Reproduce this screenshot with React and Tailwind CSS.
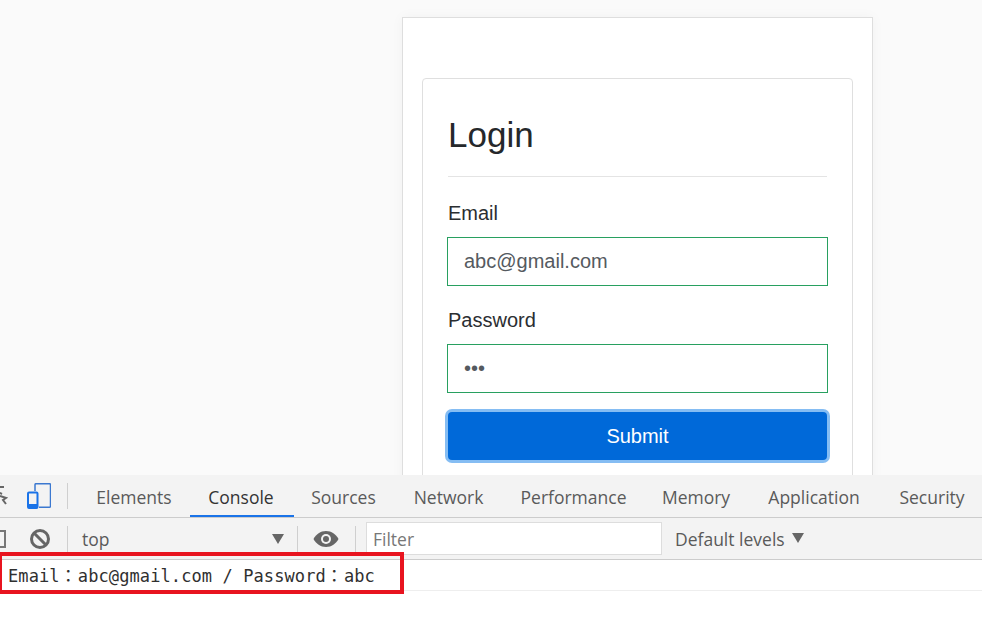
const SANS = "font-['Liberation_Sans',Arial,sans-serif]";

function Field({ label, value, className }) {
  return (
    <div className={className}>
      <div className="text-[20px] leading-[30px] text-[#2b2e31]">{label}</div>
      <div className="-mx-px mt-[9px] flex h-[49px] items-center border border-[#28a060] bg-white pb-[2px] pl-4 text-[20px] text-[#555a5f]">
        {value}
      </div>
    </div>
  );
}

function Tab({ children, active, className }) {
  return (
    <div
      className={`flex h-full items-center justify-center border-b-2 pt-[4px] ${
        active ? "border-[#1a73e8] pr-[2px] text-[#333]" : "border-transparent text-[#5a5a5a]"
      } ${className}`}
    >
      {children}
    </div>
  );
}

function Divider({ className }) {
  return <div className={`h-[26px] w-px bg-[#cfcfcf] ${className}`} />;
}

function Caret({ className }) {
  return (
    <svg width="12" height="10" viewBox="0 0 12 10" className={className}>
      <path d="M0 0h12L6 10z" fill="#666" />
    </svg>
  );
}

export default function App() {
  return (
    <div className={`flex h-[617px] w-[982px] flex-col overflow-hidden bg-white ${SANS}`}>
      {/* page under test */}
      <div className="h-[475px] shrink-0 overflow-hidden bg-[#fafafa] pl-[402px] pt-[17px]">
        <div className="h-[600px] w-[471px] border border-[#dedede] bg-white pl-[19px] pr-[19px] pt-[60px] shadow-[0_0_12px_rgba(0,0,0,0.04)]">
          <div className="h-[500px] rounded border border-[#dfdfdf] px-[25px] pt-[34px]">
            <h1 className="text-[35px] leading-[44px] text-[#25282b]">Login</h1>
            <div className="mt-[19px] h-px bg-[#e4e4e4]" />
            <Field label="Email" value="abc@gmail.com" className="mt-[21px]" />
            <Field
              label="Password"
              value={<span className="text-[20px] leading-none text-[#555a5f]">•••</span>}
              className="mt-[19px]"
            />
            <button className="mt-[19px] flex h-[48px] w-full items-center justify-center rounded-[4px] bg-[#0069d9] text-[20px] text-white shadow-[0_0_0_3px_#85bdf3]">
              Submit
            </button>
          </div>
        </div>
      </div>

      {/* devtools */}
      <div className="relative flex-1 font-['Open_Sans',sans-serif] text-[17.5px]">
        <div className="flex h-[43px] items-center border-b border-[#cccccc] bg-[#f3f3f3]">
          <svg width="8" height="26" viewBox="0 0 8 26" className="shrink-0">
            <path d="M-2 4h6M-2 9l4 2M0 13l6 2-3 2 3 4" fill="none" stroke="#666" strokeWidth="2" />
          </svg>
          <svg width="24" height="26" viewBox="0 0 24 26" className="ml-[19px] shrink-0">
            <path d="M8 8V1.700a1 1 0 0 1 1-1h13.500a1 1 0 0 1 1 1v21.600a1 1 0 0 1-1 1H12" fill="none" stroke="#3b78d0" strokeWidth="1.500" />
            <rect x="1" y="9.500" width="9.500" height="15.500" rx="1" fill="none" stroke="#1a73e8" strokeWidth="2" />
            <path d="M1 22.500h9.500" stroke="#1a73e8" strokeWidth="3" />
          </svg>
          <Divider className="ml-[16px] shrink-0" />
          <Tab className="ml-[28px] w-[76px]">Elements</Tab>
          <Tab active className="ml-[18px] w-[104px]">Console</Tab>
          <Tab className="ml-[17px] w-[65px]">Sources</Tab>
          <Tab className="ml-[37px] w-[71px]">Network</Tab>
          <Tab className="ml-[37px] w-[105px]">Performance</Tab>
          <Tab className="ml-[35px] w-[70px]">Memory</Tab>
          <Tab className="ml-[36px] w-[94px]">Application</Tab>
          <Tab className="ml-[38px] w-[66px]">Security</Tab>
        </div>

        <div className="flex h-[42px] items-center border-b border-[#cccccc] bg-[#f3f3f3] text-[#5a5a5a]">
          <div className="h-[18px] w-[6px] shrink-0 border-y-2 border-r-2 border-[#777]" />
          <svg width="22" height="22" viewBox="0 0 22 22" className="ml-[23px] shrink-0">
            <circle cx="11" cy="11" r="8.500" fill="none" stroke="#666" strokeWidth="3" />
            <path d="M5 5l12 12" stroke="#666" strokeWidth="3" />
          </svg>
          <Divider className="ml-[16px] shrink-0" />
          <span className="ml-[14px] mt-[2px] w-[190px] shrink-0">top</span>
          <Caret />
          <Divider className="ml-[13px] shrink-0" />
          <svg width="26" height="18" viewBox="0 0 26 18" className="ml-[15px] shrink-0">
            <path d="M13 1C7.500 1 3 4.500 0.500 9 3 13.500 7.500 17 13 17s10-3.500 12.500-8C23 4.500 18.500 1 13 1z" fill="#666" />
            <circle cx="13" cy="9" r="5" fill="#f3f3f3" />
            <circle cx="13" cy="9" r="3" fill="#666" />
          </svg>
          <Divider className="ml-[16px] shrink-0" />
          <div className="ml-[10px] flex h-[33px] w-[296px] shrink-0 items-center border border-[#dddddd] bg-white pl-[6px] pt-[2px] text-[#777]">
            Filter
          </div>
          <span className="ml-[13px] mt-[1px] shrink-0">Default levels</span>
          <Caret className="ml-[7px] -mt-[2px] shrink-0" />
        </div>

        <div className="flex h-[31px] items-center border-b border-[#eeeeee] bg-white pl-[8px] pt-[3px] font-['DejaVu_Sans_Mono','Noto_Sans_CJK_KR',monospace] text-[17px] tracking-[0.1px] text-[#303030]">
          Email<span className="mr-px">：</span>abc@gmail.com / Password<span className="mr-px">：</span>abc
        </div>

        {/* red annotation from the screenshot */}
        <div className="absolute left-[-2px] top-[77px] h-[42px] w-[406px] border-4 border-[#e8141f]" />
      </div>
    </div>
  );
}
